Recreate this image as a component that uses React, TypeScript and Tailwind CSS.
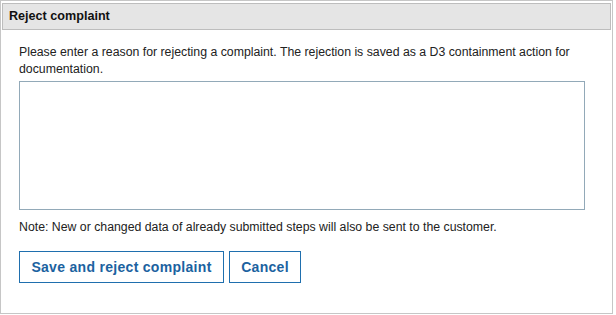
import React, { useState } from "react";

const App = () => {
  const [reason, setReason] = useState("");

  return (
    <div className="w-[616px] h-[315px] bg-white" style={{ fontFamily: '"Liberation Sans", Arial, sans-serif' }}>
      <div className="w-[613px] h-[314px] border border-[#c6c6c6] p-px flex flex-col">
        <div className="h-[27px] border border-[#bdbdbd] bg-[#e5e5e5] mt-px flex items-center pl-[6px]">
          <span className="text-[12.6px] font-bold text-[#111]">Reject complaint</span>
        </div>
        <div className="px-[17px] pt-[14px]">
          <p className="text-[12.3px] leading-[17px] text-[#222]">
            Please enter a reason for rejecting a complaint. The rejection is saved as a D3 containment action for
            documentation.
          </p>
          <textarea
            value={reason}
            onChange={(e) => setReason(e.target.value)}
            className="mt-[3px] block w-[566px] h-[129px] border border-[#92a9b8] resize-none outline-none p-1 text-[12px]"
          />
          <p className="mt-[10px] text-[12.3px] leading-[15px] text-[#222]">
            Note: New or changed data of already submitted steps will also be sent to the customer.
          </p>
          <div className="mt-[16px] flex gap-[5px]">
            <button className="w-[205px] h-[32px] border border-[#1f6fae] bg-white text-[14px] font-bold text-[#1b62a0] tracking-[0.3px]">
              Save and reject complaint
            </button>
            <button className="w-[72px] h-[32px] border border-[#1f6fae] bg-white text-[14px] font-bold text-[#1b62a0] tracking-[0.3px]">
              Cancel
            </button>
          </div>
        </div>
      </div>
    </div>
  );
};

export default App;
